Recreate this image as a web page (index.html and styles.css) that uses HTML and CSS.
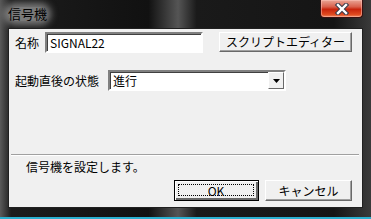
FILE: index.html
```html
<!DOCTYPE html>
<html lang="ja">
<head>
    <meta charset="UTF-8">
    <meta name="viewport" content="width=device-width, initial-scale=1.0">
    <title>信号機</title>
    <link rel="stylesheet" href="styles.css">
</head>
<body>
    <div class="window">
        <div class="titlebar">
            <span class="title">信号機</span>
            <div class="close">
                <svg width="16" height="12" viewBox="0 0 16 12">
                    <path d="M4 2l8 8M12 2l-8 8" stroke="#3b3b4a" stroke-width="4.5" stroke-linecap="square"/>
                    <path d="M4 2l8 8M12 2l-8 8" stroke="#fff" stroke-width="2.4" stroke-linecap="square"/>
                </svg>
            </div>
        </div>
        <div class="client">
            <div class="row row-name">
                <span class="label">名称</span>
                <div class="textbox">SIGNAL22</div>
                <button class="btn btn-script">スクリプトエディター</button>
            </div>
            <div class="row row-state">
                <span class="label">起動直後の状態</span>
                <div class="combo">
                    <span class="combo-text">進行</span>
                    <span class="combo-btn">
                        <svg width="7" height="4" viewBox="0 0 7 4"><path d="M0 0h7L3.5 4z" fill="#000"/></svg>
                    </span>
                </div>
            </div>
            <div class="separator"></div>
            <p class="status">信号機を設定します。</p>
            <div class="buttons">
                <button class="btn btn-ok"><span class="focus">OK</span></button>
                <button class="btn btn-cancel">キャンセル</button>
            </div>
        </div>
    </div>
</body>
</html>
```

FILE: styles.css
```css
* {
    margin: 0;
    padding: 0;
    box-sizing: border-box;
}

body {
    font-family: "Noto Sans CJK JP", "DejaVu Sans", sans-serif;
    font-size: 12px;
    color: #000;
    background-color: #000;
}

.window {
    width: 371px;
    height: 219px;
    padding: 0 8px 9px 8px;
    background: linear-gradient(90deg, #5a5a5a 0%, #1c1c1c 3%, #111 40%, #555 48%, #1a1a1a 53%, #151515 90%, #3a3a3a 100%);
    border-bottom: 2px solid #2ab0d0;
    display: flex;
    flex-direction: column;
}

.titlebar {
    height: 28px;
    display: flex;
    align-items: flex-start;
    justify-content: space-between;
}

.title {
    font-size: 13px;
    line-height: 14px;
    margin-top: 7px;
    color: #000;
    border-radius: 7px;
    background-color: rgba(200, 200, 200, 0.55);
    box-shadow: 0 0 7px 4px rgba(200, 200, 200, 0.55);
}

.close {
    width: 43px;
    height: 18px;
    border: 1px solid #3a1010;
    border-top: none;
    border-radius: 0 0 4px 4px;
    background: linear-gradient(180deg, #e9a596 0%, #d9604c 40%, #c8240c 55%, #e04a20 85%, #f08a60 100%);
    display: flex;
    align-items: center;
    justify-content: center;
    box-shadow: inset 0 0 0 1px rgba(255, 200, 190, 0.5);
}

.client {
    flex: 1;
    background-color: #f0f0f0;
    border: 1px solid #202020;
    display: flex;
    flex-direction: column;
    padding: 3px 0 0 0;
}

.row {
    display: flex;
    align-items: center;
}

.label {
    margin-left: 6px;
    line-height: 14px;
}

.textbox {
    width: 158px;
    height: 21px;
    margin-left: 6px;
    padding: 2px 0 0 3px;
    background-color: #fff;
    border: 2px solid;
    border-color: #808080 #fff #fff #808080;
    box-shadow: inset 1px 1px 0 #404040;
    line-height: 14px;
}

.btn {
    font-family: inherit;
    font-size: 12px;
    background-color: #f0f0f0;
    border: 1px solid;
    border-color: #fff #696969 #696969 #fff;
    box-shadow: inset -1px -1px 0 #a0a0a0;
    color: #000;
}

.btn-script {
    width: 133px;
    height: 20px;
    margin-left: 16px;
    margin-top: -2px;
}

.row-state {
    margin-top: 17px;
}

.combo {
    width: 178px;
    height: 21px;
    margin-left: 9px;
    background-color: #fff;
    border: 2px solid;
    border-color: #808080 #fff #fff #808080;
    box-shadow: inset 1px 1px 0 #404040;
    display: flex;
    align-items: center;
    justify-content: space-between;
}

.combo-text {
    padding-left: 3px;
}

.combo-btn {
    width: 16px;
    height: 17px;
    background-color: #f0f0f0;
    border: 1px solid;
    border-color: #fff #696969 #696969 #fff;
    display: flex;
    align-items: center;
    justify-content: center;
}

.separator {
    margin: 63px 3px 0 2px;
    border-top: 1px solid #a0a0a0;
    border-bottom: 1px solid #fff;
}

.status {
    margin: 4px 0 0 17px;
    line-height: 14px;
}

.buttons {
    display: flex;
    gap: 6px;
    margin: 6px 0 0 165px;
}

.btn-ok {
    width: 85px;
    height: 21px;
    border-color: #000;
    box-shadow: inset 1px 1px 0 #fff, inset -2px -2px 0 #696969;
    padding: 3px 4px 4px 3px;
}

.focus {
    display: block;
    height: 100%;
    border: 1px dotted #000;
    line-height: 11px;
}

.btn-cancel {
    width: 87px;
    height: 21px;
}
```
